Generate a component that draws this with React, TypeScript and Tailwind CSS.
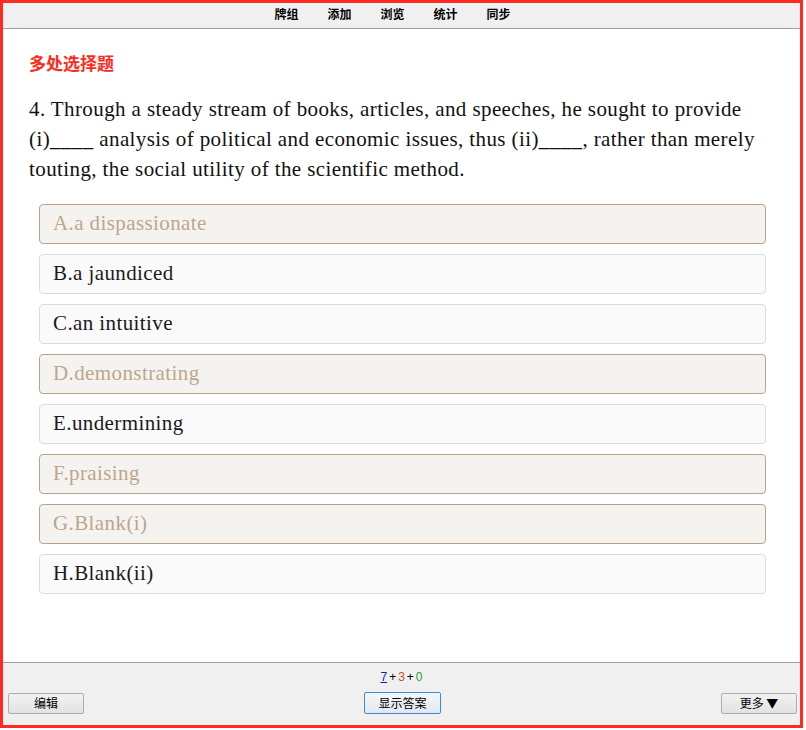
const options = [
  { label: "A.a dispassionate", picked: true },
  { label: "B.a jaundiced", picked: false },
  { label: "C.an intuitive", picked: false },
  { label: "D.demonstrating", picked: true },
  { label: "E.undermining", picked: false },
  { label: "F.praising", picked: true },
  { label: "G.Blank(i)", picked: true },
  { label: "H.Blank(ii)", picked: false },
];

const tabs = ["牌组", "添加", "浏览", "统计", "同步"];

const cjk = "font-['Microsoft_YaHei','Noto_Sans_CJK_SC',sans-serif]";
const serif = "font-['Georgia','Liberation_Serif',serif]";

export default function App() {
  return (
    <div className="w-[806px] h-[730px] bg-white">
      <div className="w-[803px] h-[728px] border-[3px] border-[#ff2a22] flex flex-col bg-white">
        {/* top toolbar */}
        <div className="h-[26px] shrink-0 bg-[#f0f0f0] border-b border-[#a0a0a0] flex justify-center items-center pr-[18px] pb-[3px]">
          <div className={`flex gap-[29px] text-[12px] font-bold text-black ${cjk}`}>
            {tabs.map((t) => (
              <span key={t} className="leading-none">
                {t}
              </span>
            ))}
          </div>
        </div>

        {/* card */}
        <div className="flex-1 px-[26px] pt-[22px]">
          <div className={`text-[17px] font-bold text-[#ff2a1a] leading-[24px] ${cjk}`}>多处选择题</div>
          <div className={`mt-[19px] ${serif} text-[21px] leading-[30px] tracking-[0.4px] text-[#111] whitespace-nowrap`}>
            <div>4. Through a steady stream of books, articles, and speeches, he sought to provide</div>
            <div>(i)____ analysis of political and economic issues, thus (ii)____, rather than merely</div>
            <div>touting, the social utility of the scientific method.</div>
          </div>
          <div className="mt-[20px] ml-[10px] w-[727px] flex flex-col gap-[10px]">
            {options.map((o) => (
              <div
                key={o.label}
                className={`h-[40px] rounded-[4px] border flex items-center px-[13px] ${serif} text-[21px] tracking-[0.4px] ${
                  o.picked
                    ? "bg-[#f5f3ef] border-[#b9a48a] text-[#bba78e]"
                    : "bg-[#fafafa] border-[#dcdcdc] text-[#1a1a1a]"
                }`}
              >
                {o.label}
              </div>
            ))}
          </div>
        </div>

        {/* bottom bar */}
        <div className="h-[63px] shrink-0 bg-[#f0f0f0] border-t border-[#a0a0a0]">
          <div className="flex justify-center pt-[7px] text-[12px] leading-[14px] font-['Liberation_Sans',sans-serif]">
            <span className="text-[#1a1aa6] underline">7</span>
            <span className="text-black px-[2px]">+</span>
            <span className="text-[#c0502a]">3</span>
            <span className="text-black px-[2px]">+</span>
            <span className="text-[#2aa02a]">0</span>
          </div>
          <div className={`flex justify-between items-center pl-[5px] pr-[3px] mt-[8px] text-[12px] text-black ${cjk}`}>
            <button className="w-[76px] h-[21px] border border-[#adadad] rounded-[2px] bg-gradient-to-b from-[#f2f2f2] to-[#e2e2e2] leading-none">
              编辑
            </button>
            <button className="w-[77px] h-[22px] border border-[#3c8ad6] rounded-[2px] bg-gradient-to-b from-[#f4f8fc] to-[#e2e8ee] leading-none">
              显示答案
            </button>
            <button className="w-[76px] h-[21px] border border-[#adadad] rounded-[2px] bg-gradient-to-b from-[#f2f2f2] to-[#e2e2e2] leading-none">
              更多 ▼
            </button>
          </div>
        </div>
      </div>
    </div>
  );
}
